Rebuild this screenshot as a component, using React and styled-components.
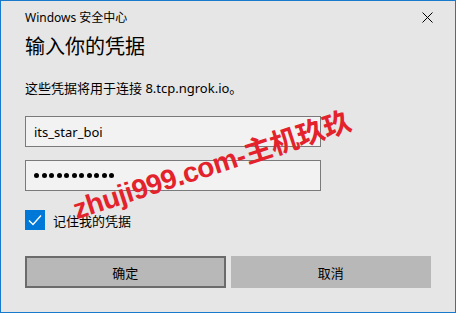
import React from 'react'
import styled, { createGlobalStyle } from 'styled-components'

const GlobalStyle = createGlobalStyle`
    html, body {
        margin: 0;
        padding: 0;
        background: #e6e6e6;
    }
    * {
        box-sizing: border-box;
    }
`

const font = `"Noto Sans", "Noto Sans CJK SC", sans-serif`

const StDialog = styled.div`
    position: relative;
    width: 456px;
    height: 313px;
    border: 1px solid #1979ca;
    background: #e6e6e6;
    padding: 0 24px;
    display: flex;
    flex-direction: column;
    font-family: ${font};
    color: #000;
    overflow: hidden;
`

const StTitleBar = styled.div`
    height: 32px;
    display: flex;
    align-items: center;
    justify-content: space-between;
    font-size: 12px;
`

const StCloseBtn = styled.button`
    width: 20px;
    height: 20px;
    margin-right: -6px;
    padding: 0;
    border: none;
    background: transparent;
    display: flex;
    align-items: center;
    justify-content: center;
`

const StHeading = styled.h1`
    margin: 0;
    font-size: 20px;
    font-weight: normal;
    line-height: 28px;
`

const StDescription = styled.p`
    margin: 17px 0 0;
    font-size: 13px;
    line-height: 20px;
`

const StInput = styled.div`
    width: 296px;
    height: 31px;
    margin-top: ${props => props.$gap}px;
    border: 1px solid #7a7a7a;
    background: #f2f2f2;
    padding: 0 8px;
    display: flex;
    align-items: center;
    font-size: 13px;
`

const StDots = styled.div`
    display: flex;
    gap: 2.5px;
`

const StDot = styled.span`
    width: 5px;
    height: 5px;
    border-radius: 50%;
    background: #000;
`

const StCheckRow = styled.label`
    margin-top: 19px;
    height: 20px;
    display: flex;
    align-items: center;
    gap: 8px;
    font-size: 13px;
`

const StCheckBox = styled.span`
    width: 20px;
    height: 20px;
    background: #0078d7;
    display: flex;
    align-items: center;
    justify-content: center;
`

const StButtonWrap = styled.div`
    margin-top: 26px;
    display: grid;
    grid-template-columns: 1fr 1fr;
    gap: 5px;
`

const StButton = styled.button`
    height: 32px;
    font-family: ${font};
    font-size: 13px;
    color: #000;
    background: #b8b8b8;
    border: 2px solid ${props => (props.$primary ? '#6b6b6b' : '#b8b8b8')};
    padding: 0;
`

const StWatermark = styled.div`
    position: absolute;
    left: 210px;
    top: 162px;
    transform: translate(-50%, -50%) rotate(-18deg);
    font-family: "Liberation Sans", "Noto Sans CJK SC", sans-serif;
    font-weight: bold;
    font-size: 28px;
    letter-spacing: -0.4px;
    color: #e3222b;
    white-space: nowrap;
    pointer-events: none;
`

const App = () => {
    return (
        <>
            <GlobalStyle />
            <StDialog>
                <StTitleBar>
                    <span>Windows 安全中心</span>
                    <StCloseBtn>
                        <svg width="11" height="11" viewBox="0 0 11 11">
                            <path d="M0.5 0.5 L10.5 10.5 M10.5 0.5 L0.5 10.5" stroke="#000" strokeWidth="1" />
                        </svg>
                    </StCloseBtn>
                </StTitleBar>
                <StHeading>输入你的凭据</StHeading>
                <StDescription>这些凭据将用于连接 8.tcp.ngrok.io。</StDescription>
                <StInput $gap={18}>its_star_boi</StInput>
                <StInput $gap={13}>
                    <StDots>
                        {Array.from({ length: 11 }).map((_, i) => <StDot key={i} />)}
                    </StDots>
                </StInput>
                <StCheckRow>
                    <StCheckBox>
                        <svg width="14" height="12" viewBox="0 0 14 12">
                            <path d="M1 6.5 L5 10.5 L13 1.5" fill="none" stroke="#fff" strokeWidth="1.4" />
                        </svg>
                    </StCheckBox>
                    <span>记住我的凭据</span>
                </StCheckRow>
                <StButtonWrap>
                    <StButton $primary>确定</StButton>
                    <StButton>取消</StButton>
                </StButtonWrap>
                <StWatermark>zhuji999.com-主机玖玖</StWatermark>
            </StDialog>
        </>
    )
}

export default App
